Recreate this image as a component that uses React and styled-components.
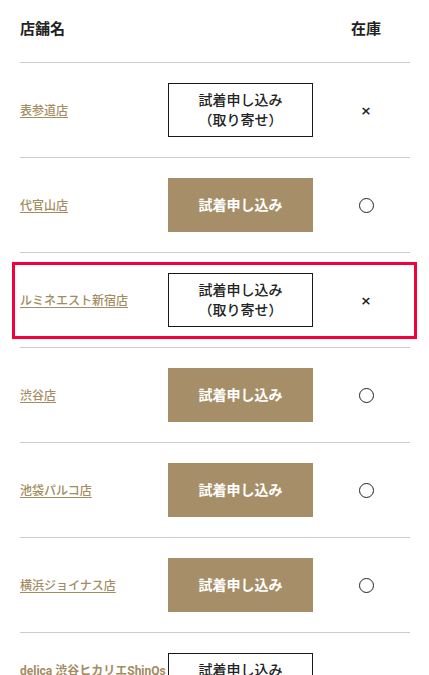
import React from "react";
import styled, { createGlobalStyle, css } from "styled-components";

const Global = createGlobalStyle`
  html, body { margin: 0; padding: 0; background: #fff; }
  body { font-family: Roboto, "Noto Sans CJK JP", sans-serif; color: #222; }
  * { box-sizing: border-box; }
`;

const Table = styled.div`
  padding: 0 19px 0 20px;
`;

const grid = css`
  display: grid;
  grid-template-columns: 148px 145px 1fr;
  align-items: center;
  border-bottom: 1px solid #cccccc;
`;

const HeaderRow = styled.div`
  ${grid};
  height: 63px;
  padding-bottom: 5px;
`;

const HeadCell = styled.div`
  font-size: 15px;
  font-weight: 700;
  line-height: 22px;
  color: #222;
  ${(p) => p.$stock && css`
    grid-column: 3;
    text-align: center;
    padding-left: 9px;
  `}
`;

const Row = styled.div`
  ${grid};
  position: relative;
  padding: 20px 0;
  ${(p) => p.$highlight && css`
    &::after {
      content: "";
      position: absolute;
      top: 9px;
      bottom: 8px;
      left: -8px;
      right: -7px;
      border: 3px solid #f5003c;
      pointer-events: none;
    }
  `}
`;

const NameCell = styled.div`
  margin-right: -2px;
`;

const StoreLink = styled.a`
  font-size: 12px;
  line-height: 18px;
  color: #a38b62;
  text-decoration: underline;
  text-underline-offset: 2px;
  font-weight: ${(p) => (p.$plain ? 700 : 500)};
  ${(p) => p.$plain && css`text-decoration: none;`}
`;

const TryButton = styled.button`
  width: 145px;
  height: 54px;
  margin: 0;
  padding: 0;
  display: flex;
  flex-direction: column;
  align-items: center;
  justify-content: center;
  font-family: inherit;
  font-size: 14px;
  line-height: 20px;
  cursor: pointer;
  ${(p) =>
    p.$filled
      ? css`
          background: #a68f68;
          border: none;
          color: #fff;
          font-weight: 700;
        `
      : css`
          background: #fff;
          border: 1px solid #1a1a1a;
          color: #222;
          font-weight: 500;
        `}
`;

const Stock = styled.div`
  display: flex;
  justify-content: center;
  padding-left: 9px;
`;

const Cross = styled.span`
  font-size: 13px;
  font-weight: 700;
  color: #222;
  line-height: 1;
  font-family: "DejaVu Sans", sans-serif;
`;

const Circle = styled.span`
  width: 15px;
  height: 15px;
  border: 1px solid #222;
  border-radius: 50%;
`;

const stores = [
  { name: "表参道店", available: false },
  { name: "代官山店", available: true },
  { name: "ルミネエスト新宿店", available: false, highlight: true },
  { name: "渋谷店", available: true },
  { name: "池袋パルコ店", available: true },
  { name: "横浜ジョイナス店", available: true },
  { name: "delica 渋谷ヒカリエShinQs店", available: false, plain: true },
];

export default function App() {
  return (
    <>
      <Global />
      <Table>
        <HeaderRow>
          <HeadCell>店舗名</HeadCell>
          <HeadCell $stock>在庫</HeadCell>
        </HeaderRow>
        {stores.map((s) => (
          <Row key={s.name} $highlight={s.highlight}>
            <NameCell>
              <StoreLink href="#" $plain={s.plain}>{s.name}</StoreLink>
            </NameCell>
            <TryButton $filled={s.available}>
              {s.available ? (
                <span>試着申し込み</span>
              ) : (
                <>
                  <span>試着申し込み</span>
                  <span>（取り寄せ）</span>
                </>
              )}
            </TryButton>
            <Stock>{s.available ? <Circle /> : <Cross>×</Cross>}</Stock>
          </Row>
        ))}
      </Table>
    </>
  );
}
